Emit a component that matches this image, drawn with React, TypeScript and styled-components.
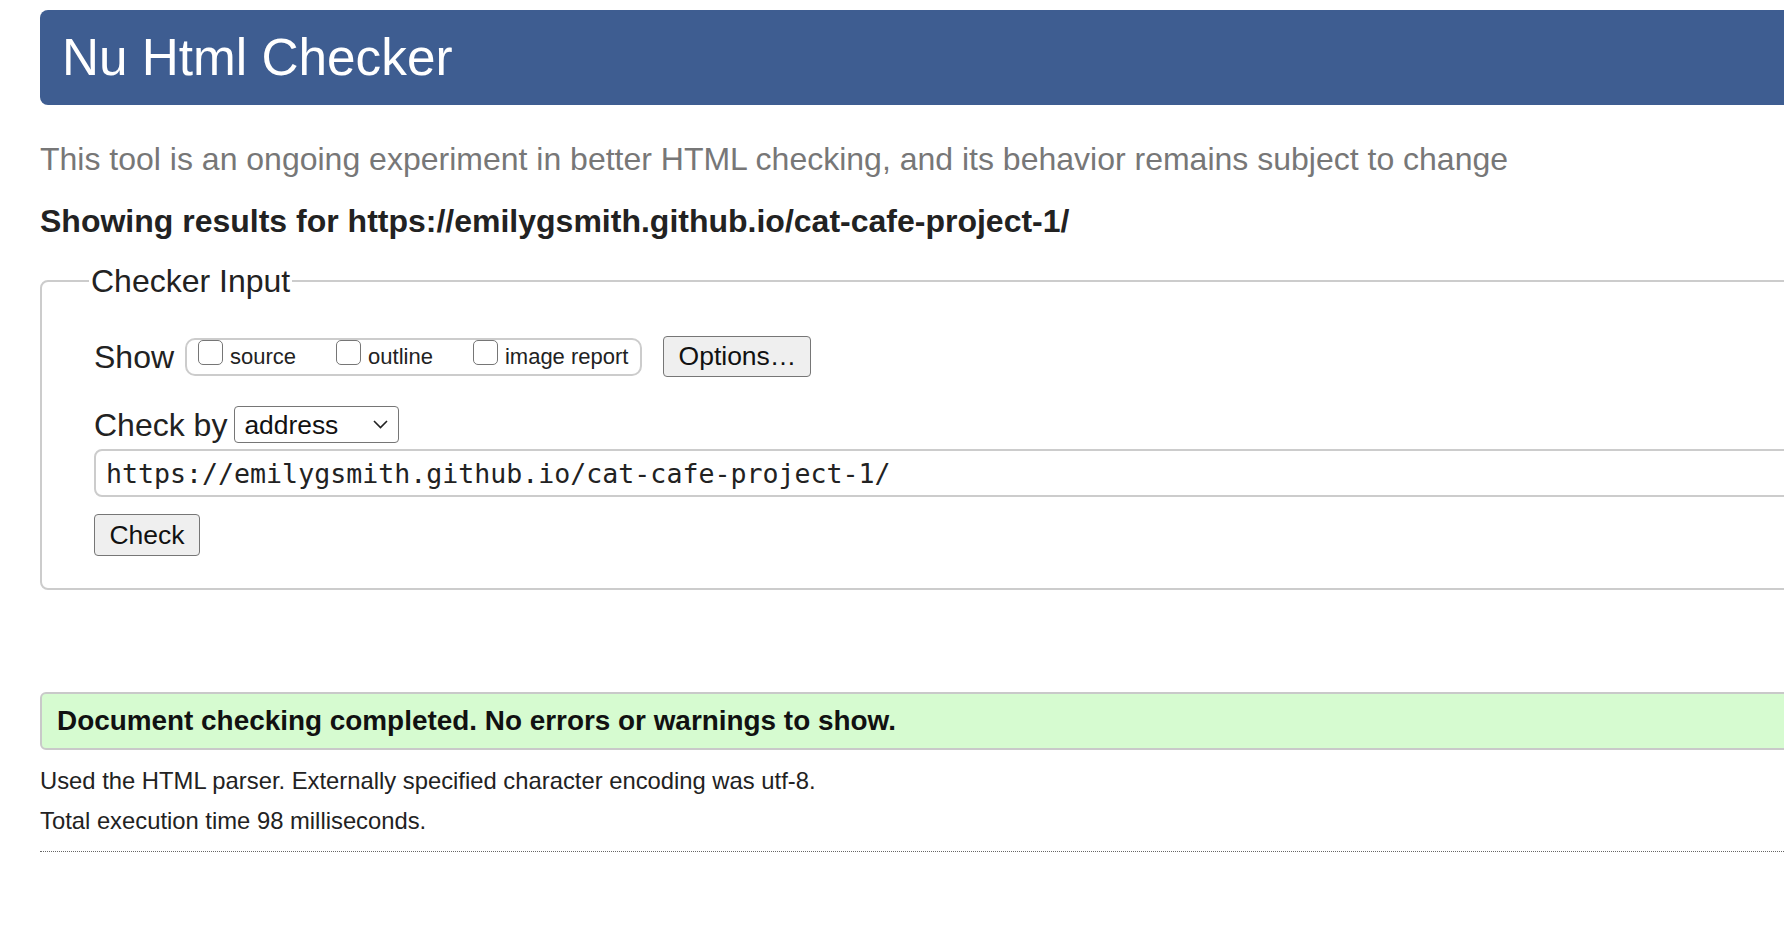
import React from "react";
import styled, { createGlobalStyle } from "styled-components";

const GlobalStyle = createGlobalStyle`
  html, body {
    margin: 0;
    padding: 0;
    background: #ffffff;
    overflow: hidden;
  }
  body {
    font-family: "Liberation Sans", Arial, Helvetica, sans-serif;
    color: #222222;
  }
  * { box-sizing: border-box; }
`;

const Page = styled.div`
  width: 2000px;
  padding: 10px 0 0 40px;
`;

const Header = styled.header`
  height: 95px;
  background: #3e5d91;
  border-radius: 8px;
  display: flex;
  align-items: center;
  padding-left: 22px;
`;

const Title = styled.h1`
  margin: 0;
  font-size: 51.3px;
  font-weight: 400;
  line-height: 1;
  color: #ffffff;
`;

const Subtitle = styled.p`
  margin: 34px 0 0;
  font-size: 32px;
  line-height: 40px;
  color: #777777;
`;

const ResultsHeading = styled.h2`
  margin: 22px 0 0;
  font-size: 32px;
  line-height: 40px;
  font-weight: 700;
  color: #222222;
`;

const Fieldset = styled.fieldset`
  margin: 20px 0 0;
  padding: 0 0 32px 52px;
  border: 2px solid #cccccc;
  border-radius: 8px;
  min-width: 0;
`;

const Legend = styled.legend`
  font-size: 32px;
  line-height: 40px;
  padding: 0 2px;
  margin-left: -5px;
  color: #222222;
`;

const Row = styled.div<{ $top: number; $height: number }>`
  display: flex;
  align-items: center;
  margin-top: ${(p) => p.$top}px;
  height: ${(p) => p.$height}px;
`;

const RowLabel = styled.span`
  font-size: 32px;
  line-height: 40px;
  color: #222222;
  white-space: nowrap;
`;

const Pill = styled.div`
  display: flex;
  align-items: flex-start;
  gap: 40px;
  height: 38px;
  margin-left: 11px;
  padding: 0 12px 0 11px;
  border: 2px solid #cccccc;
  border-radius: 10px;
`;

const OptionItem = styled.label`
  display: flex;
  align-items: flex-start;
  gap: 7px;
`;

const Box = styled.input`
  appearance: none;
  -webkit-appearance: none;
  margin: 0;
  width: 25px;
  height: 25px;
  border: 1.5px solid #767676;
  border-radius: 5px;
  background: #ffffff;
`;

const OptionText = styled.span`
  font-size: 22px;
  line-height: 34px;
  color: #222222;
  white-space: nowrap;
`;

const Button = styled.button<{ $h: number; $w: number; $ml?: number }>`
  height: ${(p) => p.$h}px;
  width: ${(p) => p.$w}px;
  margin-left: ${(p) => p.$ml ?? 0}px;
  padding: 0;
  font-family: "Liberation Sans", Arial, Helvetica, sans-serif;
  font-size: 26.5px;
  color: #111111;
  background: #efefef;
  border: 1.5px solid #767676;
  border-radius: 4px;
`;

const SelectWrap = styled.span`
  position: relative;
  display: inline-flex;
  margin-left: 7px;
`;

const Select = styled.select`
  appearance: none;
  -webkit-appearance: none;
  width: 165px;
  height: 37px;
  padding: 0 0 0 9px;
  font-family: "Liberation Sans", Arial, Helvetica, sans-serif;
  font-size: 26.4px;
  color: #111111;
  background: #ffffff;
  border: 1.5px solid #767676;
  border-radius: 4px;
`;

const Chevron = styled.svg`
  position: absolute;
  right: 11px;
  top: 14px;
  pointer-events: none;
`;

const UrlInput = styled.input`
  display: block;
  width: 100%;
  height: 48px;
  margin-top: 6px;
  padding: 0 0 0 10px;
  font-family: "DejaVu Sans Mono", "Liberation Mono", monospace;
  font-size: 26.6px;
  color: #222222;
  border: 2px solid #cccccc;
  border-radius: 8px;
  background: #ffffff;
`;

const CheckRow = styled.div`
  margin-top: 17px;
`;

const SuccessBox = styled.div`
  margin-top: 102px;
  height: 58px;
  display: flex;
  align-items: center;
  padding-left: 15px;
  background: #d6fbd0;
  border: 2px solid #c9c9c9;
  border-radius: 6px;
  font-size: 27.9px;
  font-weight: 700;
  color: #111111;
`;

const Info = styled.p<{ $top: number }>`
  margin: ${(p) => p.$top}px 0 0;
  font-size: 23.8px;
  line-height: 28px;
  color: #222222;
`;

const Dotted = styled.hr`
  margin: 16px 0 0;
  border: 0;
  border-top: 1px dotted #666666;
  height: 0;
`;

export default function App() {
  return (
    <>
      <GlobalStyle />
      <Page>
        <Header>
          <Title>Nu Html Checker</Title>
        </Header>
        <Subtitle>
          This tool is an ongoing experiment in better HTML checking, and its behavior remains subject to change
        </Subtitle>
        <ResultsHeading>Showing results for https://emilygsmith.github.io/cat-cafe-project-1/</ResultsHeading>
        <Fieldset>
          <Legend>Checker Input</Legend>
          <Row $top={35} $height={41}>
            <RowLabel>Show</RowLabel>
            <Pill>
              <OptionItem>
                <Box type="checkbox" />
                <OptionText>source</OptionText>
              </OptionItem>
              <OptionItem>
                <Box type="checkbox" />
                <OptionText>outline</OptionText>
              </OptionItem>
              <OptionItem>
                <Box type="checkbox" />
                <OptionText>image report</OptionText>
              </OptionItem>
            </Pill>
            <Button $h={41} $w={148} $ml={21} type="button">
              Options…
            </Button>
          </Row>
          <Row $top={29} $height={37}>
            <RowLabel>Check by</RowLabel>
            <SelectWrap>
              <Select defaultValue="address">
                <option value="address">address</option>
                <option value="file">file upload</option>
                <option value="text">text input</option>
              </Select>
              <Chevron width="15" height="9" viewBox="0 0 15 9">
                <path d="M1 1 L7.5 7.5 L14 1" fill="none" stroke="#222" strokeWidth="1.6" />
              </Chevron>
            </SelectWrap>
          </Row>
          <UrlInput type="url" defaultValue="https://emilygsmith.github.io/cat-cafe-project-1/" />
          <CheckRow>
            <Button $h={42} $w={106} type="button">
              Check
            </Button>
          </CheckRow>
        </Fieldset>
        <SuccessBox>Document checking completed. No errors or warnings to show.</SuccessBox>
        <Info $top={17}>Used the HTML parser. Externally specified character encoding was utf-8.</Info>
        <Info $top={12}>Total execution time 98 milliseconds.</Info>
        <Dotted />
      </Page>
    </>
  );
}
